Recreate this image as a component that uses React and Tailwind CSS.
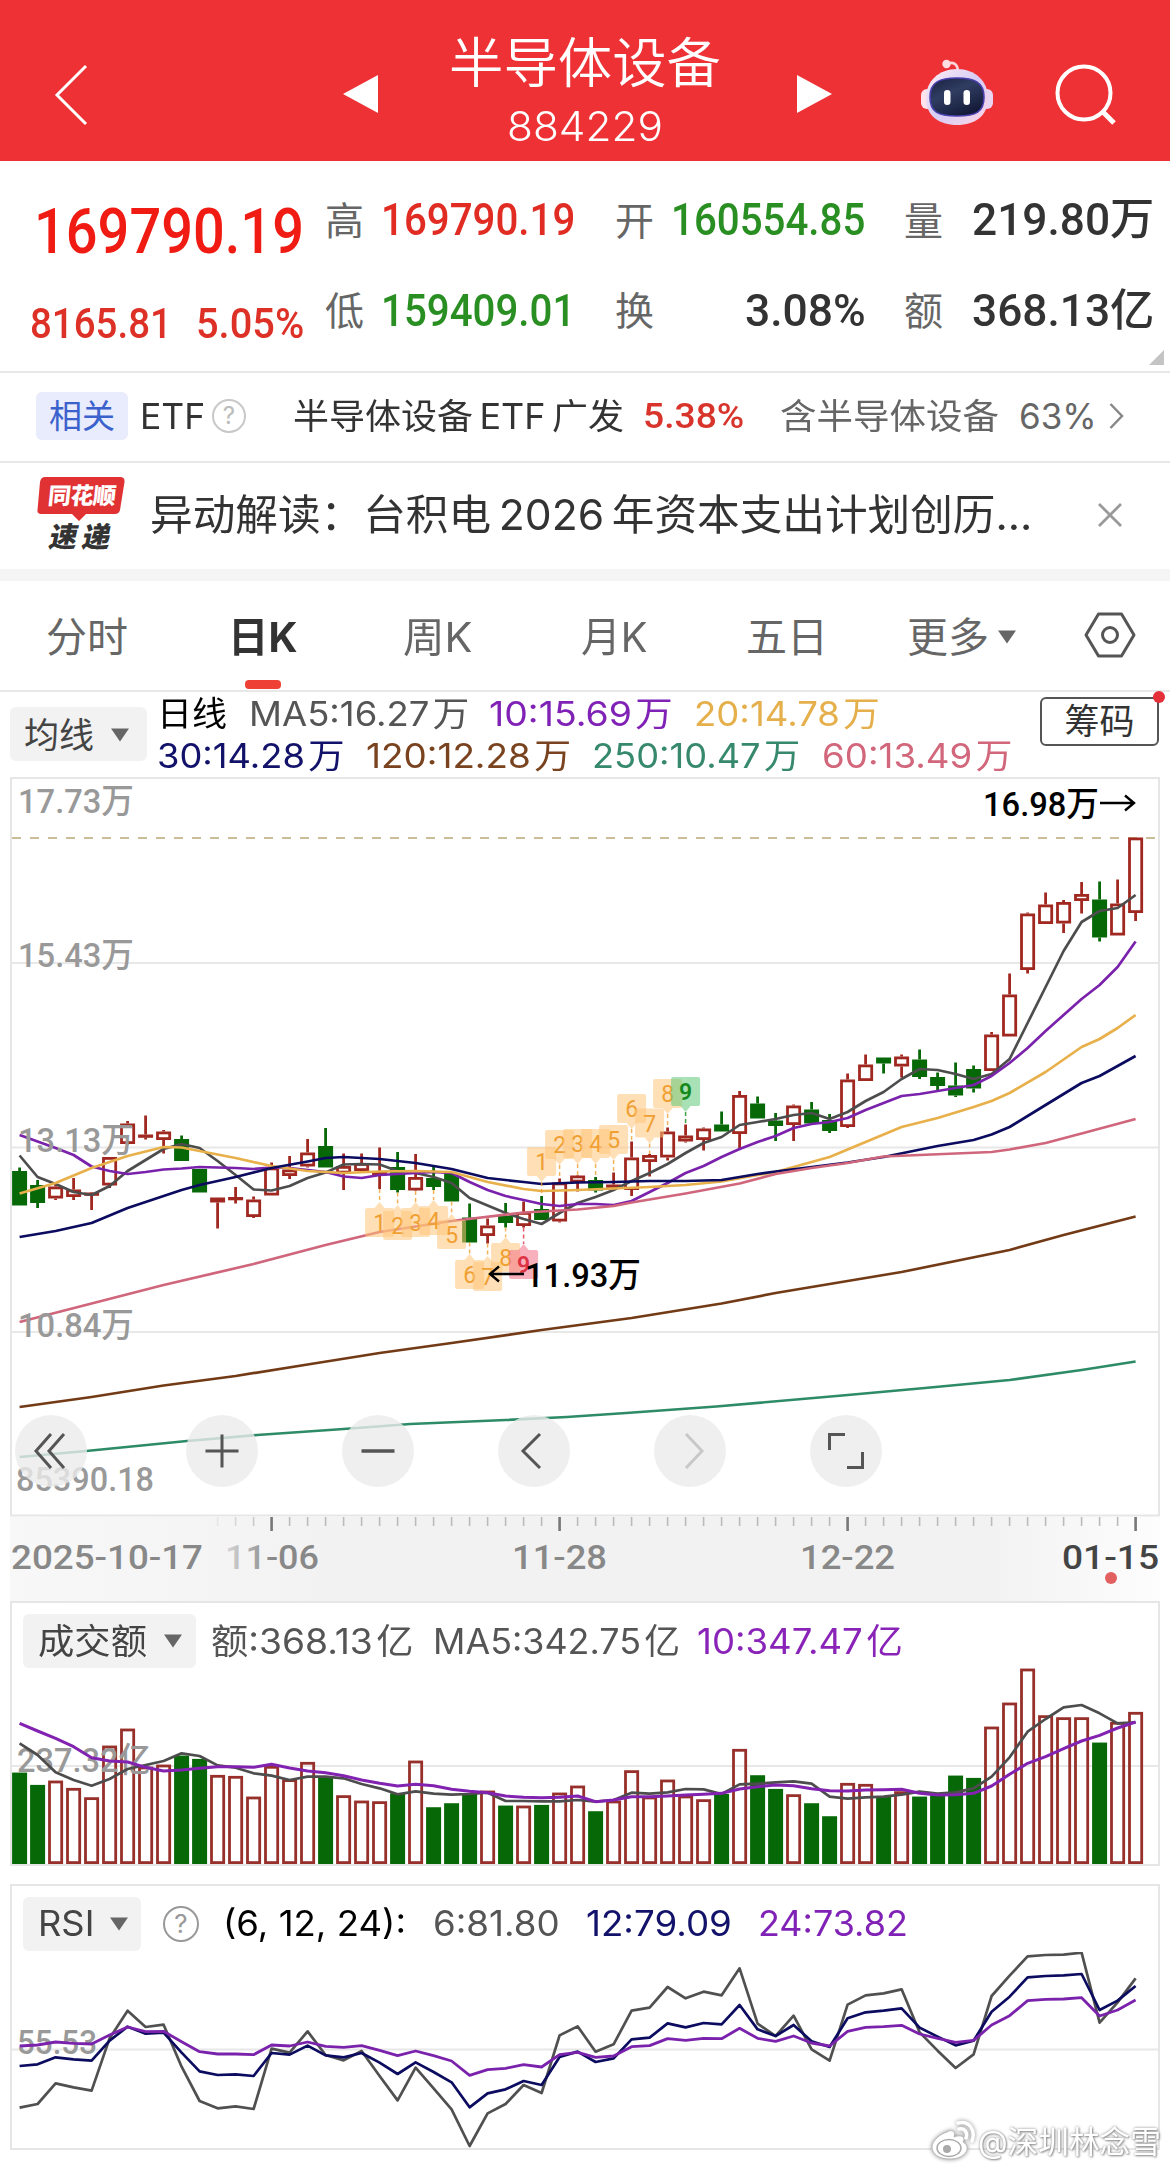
import React, { useLayoutEffect, useRef, useState } from 'react';

// Candle: [type, body top, body bottom, high, low], r = up (hollow), g = down (filled)
const candles = [
  ['g', 1171, 1205.5, 1167.5, 1205.5], ['g', 1185, 1203, 1180, 1208], ['r', 1186.5, 1198.5, 1183, 1200], ['r', 1189.5, 1197, 1178, 1200],
  ['r', 1192.5, 1195.5, 1192, 1210], ['r', 1157, 1185.5, 1157, 1188], ['r', 1123.5, 1144, 1121, 1144.5], ['r', 1134.5, 1137.5, 1115.5, 1139.5],
  ['r', 1131.5, 1140, 1130, 1153.5], ['g', 1139, 1161, 1135.5, 1161], ['g', 1169, 1192.5, 1169, 1192.5], ['r', 1197.5, 1202.5, 1197.5, 1228.5],
  ['r', 1197, 1200, 1187, 1203.5], ['r', 1199.5, 1217, 1196.5, 1218], ['r', 1167.5, 1195.5, 1162.5, 1195.5], ['r', 1169.5, 1176, 1156, 1179],
  ['r', 1152.5, 1166.5, 1139, 1167.5], ['g', 1146, 1167.5, 1128, 1167.5], ['r', 1166, 1173.5, 1153.5, 1190], ['r', 1163, 1171, 1153.5, 1172],
  ['r', 1172, 1175, 1147.5, 1189], ['g', 1167, 1190, 1152, 1192.5], ['r', 1177, 1190.5, 1154, 1191], ['g', 1178, 1187, 1166, 1190],
  ['g', 1173.5, 1201.5, 1172, 1201.5], ['g', 1217.5, 1242.5, 1203.5, 1242.5], ['r', 1225.5, 1236, 1218.5, 1243.5], ['g', 1216, 1223, 1203, 1227.5],
  ['r', 1212, 1226, 1201.5, 1227.5], ['g', 1209, 1220, 1196, 1220], ['r', 1182.5, 1221.5, 1178.5, 1222.5], ['r', 1175.5, 1182.5, 1175, 1191.5],
  ['g', 1180, 1190.5, 1177, 1192.5], ['r', 1184.5, 1187.5, 1172.5, 1189], ['r', 1157.5, 1190, 1141.5, 1196], ['r', 1155, 1162, 1154, 1176.5],
  ['r', 1131.5, 1157.5, 1127.5, 1160.5], ['r', 1135.5, 1141.5, 1124.5, 1142.5], ['r', 1128.5, 1140, 1127.5, 1150.5], ['g', 1124.5, 1131.5, 1111.5, 1131.5],
  ['r', 1095, 1134, 1091, 1148.5], ['g', 1103.5, 1118.5, 1096.5, 1118.5], ['g', 1120.5, 1126, 1113, 1141], ['r', 1105.5, 1125, 1104.5, 1141],
  ['g', 1109.5, 1123.5, 1102, 1123.5], ['g', 1120, 1131, 1114, 1133], ['r', 1079.5, 1127, 1073.5, 1128], ['r', 1064.5, 1081, 1054.5, 1081],
  ['g', 1057.5, 1063.5, 1057.5, 1073.5], ['r', 1056.5, 1066.5, 1054.5, 1077.5], ['g', 1059.5, 1077, 1049.5, 1079], ['g', 1077, 1086, 1072.5, 1090],
  ['g', 1085.5, 1095.5, 1062.5, 1097], ['g', 1069, 1088.5, 1065.5, 1092.5], ['r', 1034.5, 1071, 1032, 1071], ['r', 994.5, 1036.5, 973.5, 1036.5],
  ['r', 913.5, 970, 912.5, 973.5], ['r', 904.5, 924, 892.5, 924], ['r', 902, 923.5, 900, 933], ['r', 894, 901, 882, 913.5],
  ['g', 899.5, 937.5, 881.5, 941.5], ['r', 903.5, 935.5, 879.5, 935.5], ['r', 837.5, 913, 837.5, 921],
];

// Moving averages on the main chart, [bar index, y]
const priceLines = [
  { color: '#2e8b68', pts: [[0, 1457], [3.7, 1451], [9.3, 1441], [13.2, 1435], [18, 1429], [21.7, 1424], [27, 1420], [30.4, 1417], [33.7, 1413], [38.7, 1406.5], [45.7, 1395.5], [50.3, 1388], [55, 1380], [59, 1370], [62, 1361.5]] },
  { color: '#733a16', pts: [[0, 1407], [4, 1397], [8, 1385.5], [12, 1376], [16, 1364.5], [20, 1353], [24, 1343], [29, 1330], [34, 1318], [39, 1303.5], [42, 1293], [49, 1272], [55, 1250], [58, 1235], [62, 1216.5]] },
  { color: '#4d4d4d', pts: [1155.5, 1177, 1184, 1192, 1195, 1186, 1171, 1160, 1149, 1144, 1148, 1161, 1175, 1189.5, 1190.5, 1186, 1178, 1172.5, 1164.5, 1164, 1164.5, 1171, 1173, 1177, 1183, 1198, 1205.5, 1213, 1219, 1224, 1213, 1203, 1197, 1190, 1181, 1173, 1164, 1153, 1143, 1137, 1125, 1122, 1119, 1115, 1113, 1119, 1112, 1101, 1092, 1079, 1069, 1070, 1074, 1079, 1074, 1059, 1023, 987, 951, 922, 911, 908, 895].map((y, i) => [i, y]) },
  { color: '#7a22ac', pts: [1135, 1141.5, 1148, 1155, 1166.5, 1171, 1174, 1172, 1169.5, 1168.5, 1167, 1167.5, 1168, 1169, 1167.5, 1168, 1170, 1172, 1176.5, 1178, 1175, 1174, 1173, 1172, 1173, 1182, 1190, 1196, 1200, 1204, 1206, 1204, 1204, 1205, 1201, 1192, 1183, 1173, 1166, 1157, 1149, 1142, 1136, 1128, 1124, 1122, 1118, 1110, 1103, 1096, 1094, 1091, 1088, 1085, 1076, 1063, 1048, 1031, 1015, 999, 985, 967, 941.5].map((y, i) => [i, y]) },
  { color: '#e8b04a', pts: [[0, 1193.5], [2, 1183], [4, 1168], [6, 1156], [8, 1147], [9, 1147.5], [10, 1151], [12, 1158], [14, 1166], [16, 1171], [18, 1173], [20, 1171.5], [22, 1171], [24, 1172], [26, 1182], [28, 1189], [29, 1191], [31, 1190], [33, 1188.5], [35, 1187], [37, 1185], [39, 1181.5], [41, 1175], [42, 1172], [44, 1162], [45, 1157], [47, 1142], [49, 1127], [51, 1118], [53, 1107], [54, 1101], [55, 1093], [57, 1072], [59, 1047], [60, 1039], [61, 1028], [62, 1015]] },
  { color: '#0b0b60', pts: [[0, 1237], [2, 1231], [4, 1223], [6, 1208], [8, 1196], [9, 1190], [10, 1185], [12, 1177], [14, 1168], [16, 1161.5], [17, 1158], [18, 1157], [20, 1159], [22, 1163], [24, 1169], [26, 1178], [28, 1182], [29, 1184], [31, 1182.5], [33, 1182], [35, 1181], [37, 1181], [39, 1180], [41, 1174], [42, 1171.5], [44, 1167], [46, 1162.5], [48, 1157], [51, 1146], [53, 1140], [54, 1134.5], [55, 1127], [57, 1105], [59, 1083], [60, 1076], [62, 1056]] },
  { color: '#d0667c', pts: [[0, 1322], [4, 1303.5], [8, 1285], [13, 1264], [17, 1245], [20, 1232], [24, 1221], [28, 1212.5], [31, 1209.5], [33, 1206], [34, 1202.5], [37, 1193.5], [40, 1183.5], [42, 1174], [44, 1168], [46, 1163], [48, 1156.5], [50, 1155], [54, 1152], [55, 1149.5], [57, 1143], [59, 1133.5], [62, 1119]] },
];

// Turnover bar tops and averages, thirds of a pixel below y=1650
const volumes = [368, 405, 392, 414, 442, 287, 236, 350, 344, 317, 327, 375, 378, 440, 348, 388, 336, 382, 436, 452, 454, 430, 332, 472, 460, 430, 422, 467, 467, 465, 428, 407, 484, 452, 361, 440, 389, 437, 448, 432, 297, 376, 417, 433, 460, 499, 399, 402, 440, 424, 440, 433, 377, 384, 230, 158, 56, 196, 202, 202, 278, 216, 186];
const volumeDown = [0, 1, 9, 10, 17, 21, 23, 24, 25, 27, 29, 32, 39, 41, 42, 44, 45, 48, 50, 51, 52, 53, 60];
const volumeMa5 = [280, 315, 367, 390, 407, 387, 357, 345, 333, 310, 318, 346, 353, 370, 377, 390, 380, 380, 385, 402, 415, 433, 424, 431, 434, 432, 428, 453, 453, 454, 454, 450, 455, 450, 428, 431, 427, 417, 418, 432, 403, 401, 397, 394, 401, 440, 446, 442, 440, 434, 425, 431, 427, 415, 380, 322, 245, 207, 172, 165, 190, 220, 217];
const volumeMa10 = [220, 243, 265, 290, 323, 333, 336, 352, 363, 360, 355, 350, 350, 352, 343, 354, 363, 368, 377, 390, 400, 408, 403, 407, 418, 424, 428, 438, 442, 443, 442, 438, 455, 450, 440, 440, 438, 435, 433, 430, 417, 410, 405, 407, 416, 422, 423, 420, 419, 418, 430, 435, 434, 430, 408, 373, 340, 320, 296, 273, 256, 234, 216];

// RSI values, thirds of a pixel below y=1870
const rsi6 = [713, 702, 640, 652, 662, 505, 422, 471, 464, 590, 693, 715, 709, 717, 536, 548, 484, 555, 571, 543, 618, 691, 593, 655, 718, 828, 730, 702, 645, 669, 496, 469, 545, 523, 422, 413, 351, 385, 365, 376, 295, 461, 498, 437, 538, 572, 404, 376, 370, 358, 487, 542, 594, 553, 378, 317, 259, 255, 254, 248, 458, 397, 325];
const rsi12 = [588, 583, 562, 568, 572, 512, 470, 491, 488, 548, 604, 615, 613, 618, 549, 554, 527, 556, 562, 549, 578, 612, 577, 606, 637, 712, 670, 658, 633, 645, 561, 545, 576, 565, 508, 503, 460, 472, 459, 463, 405, 478, 498, 465, 514, 531, 445, 427, 422, 415, 473, 500, 526, 512, 425, 380, 322, 318, 316, 312, 420, 392, 348];
const rsi24 = [528, 525, 516, 520, 522, 495, 471, 485, 484, 515, 545, 552, 552, 554, 525, 528, 516, 529, 532, 527, 541, 557, 543, 557, 573, 616, 599, 595, 584, 591, 554, 547, 562, 558, 530, 527, 506, 511, 505, 506, 475, 505, 514, 498, 519, 528, 484, 472, 470, 466, 492, 505, 517, 511, 465, 437, 392, 388, 387, 383, 438, 420, 390];

// Nine-turn markers: [bar index, label, box top, side]
const markers = [
  [20, 1, 1208, 'below'], [21, 2, 1211, 'below'], [22, 3, 1208, 'below'], [23, 4, 1206, 'below'], [24, 5, 1220, 'below'],
  [25, 6, 1260, 'below'], [26, 7, 1262, 'below'], [27, 8, 1243, 'below'], [28, 9, 1250, 'below'],
  [29, 1, 1147, 'above'], [30, 2, 1130, 'above'], [31, 3, 1129, 'above'], [32, 4, 1129, 'above'], [33, 5, 1125, 'above'],
  [34, 6, 1094, 'above'], [35, 7, 1108.5, 'above'], [36, 8, 1079, 'above'], [37, 9, 1077, 'above'],
];

const barX = (i) => 19.6 + i * 18;
const toPoints = (pts) => pts.map(([i, y]) => `${barX(i)},${y}`).join(' ');
const seriesPoints = (values, base) => values.map((v, i) => `${barX(i)},${base + v / 3}`).join(' ');

// Squeezes or stretches one line of text to a fixed width
const Fit = ({ w, className = '', children }) => {
  const ref = useRef(null);
  const [scale, setScale] = useState(1);

  useLayoutEffect(() => {
    setScale(w / ref.current.offsetWidth);
  }, [w]);

  return (
    <span className="block shrink-0 whitespace-nowrap" style={{ width: w }}>
      <span ref={ref} className={`inline-block origin-left ${className}`} style={{ transform: `scaleX(${scale})` }}>
        {children}
      </span>
    </span>
  );
};

const Line = ({ points, color, width = 2.7 }) => (
  <polyline points={points} fill="none" stroke={color} strokeWidth={width} strokeLinejoin="round" />
);

const Down = ({ className = '' }) => (
  <svg className={`shrink-0 ${className}`} viewBox="0 0 18 14">
    <path d="M0 0.5H18L9 13.5Z" fill="#666" />
  </svg>
);

const AxisLabel = ({ x, y, w, children, color = '#999' }) => (
  <text x={x} y={y} textLength={w} lengthAdjust="spacingAndGlyphs" fontSize="34" fontWeight="500" fill={color} className="font-[Roboto,'Noto_Sans_CJK_SC',sans-serif]">
    {children}
  </text>
);

const Header = () => (
  <header className="flex h-[161px] items-center bg-[#ee3135] pl-[53px] text-white">
    <svg className="mt-[28px] h-[62px] w-[36px]" viewBox="0 0 36 62" fill="none" stroke="#fff" strokeWidth="3">
      <path d="M33 2L4 31L33 60" />
    </svg>
    <svg className="mt-[26px] ml-[254px] h-[38px] w-[35px]" viewBox="0 0 35 38">
      <path d="M35 0V38L0 19Z" fill="#fff" />
    </svg>
    <div className="ml-[70px] flex w-[274px] flex-col items-center pt-[20px]">
      <span className="text-[54px] leading-[64px] font-[350]"><Fit w={272}>半导体设备</Fit></span>
      <span className="mt-[7px] text-[41px] leading-[46px] font-[350]">
        <Fit w={156}>884229</Fit>
      </span>
    </div>
    <svg className="mt-[26px] ml-[75px] h-[38px] w-[35px]" viewBox="0 0 35 38">
      <path d="M0 0V38L35 19Z" fill="#fff" />
    </svg>
    <svg className="mt-[23px] ml-[88px] h-[68px] w-[74px]" viewBox="0 0 74 68">
      <defs>
        <linearGradient id="shell" x1="0" y1="0" x2="1" y2="1">
          <stop offset="0" stopColor="#ffeef2" />
          <stop offset="0.5" stopColor="#d6cdf6" />
          <stop offset="1" stopColor="#fdd5e4" />
        </linearGradient>
        <linearGradient id="visor" x1="0" y1="0" x2="0.6" y2="1">
          <stop offset="0" stopColor="#18203f" />
          <stop offset="0.45" stopColor="#303d62" />
          <stop offset="1" stopColor="#141b38" />
        </linearGradient>
      </defs>
      <path d="M27 6C33 3 38 6 38 14" fill="none" stroke="#ffd5da" strokeWidth="2.6" />
      <circle cx="26.5" cy="6" r="4.2" fill="#ffdfe3" />
      <rect x="1" y="31" width="14" height="20" rx="6" fill="#ffe3ec" />
      <rect x="59" y="31" width="14" height="20" rx="6" fill="#e9d4f2" />
      <path d="M37 11C55 11 68 23 68 40C68 58 55 67 37 67C19 67 6 58 6 40C6 23 19 11 37 11Z" fill="url(#shell)" />
      <path d="M37 20C54 20 64 24 64 39C64 54 56 58 37 58C18 58 10 54 10 39C10 24 20 20 37 20Z" fill="url(#visor)" stroke="#4a3fae" strokeWidth="1.6" />
      <rect x="24" y="32" width="6.5" height="15" rx="3.2" fill="#fff" />
      <rect x="43.5" y="32" width="6.5" height="15" rx="3.2" fill="#fff" />
    </svg>
    <svg className="mt-[26px] ml-[61px] h-[62px] w-[62px]" viewBox="0 0 62 62" fill="none" stroke="#fff" strokeWidth="4">
      <circle cx="29" cy="30" r="26.5" />
      <path d="M48 49L59 60" strokeWidth="5" />
    </svg>
  </header>
);

const Quote = () => (
  <section className="relative h-[210px] font-[Roboto,'Noto_Sans_CJK_SC',sans-serif] font-medium">
    <div className="flex h-[118px] items-center pl-[34px] text-[44px] leading-none text-[#333]">
      <span className="pt-[22px] text-[63px] text-[#f01b12]"><Fit w={270}>169790.19</Fit></span>
      <span className="ml-[21px] pt-[4px] text-[39px] font-normal text-[#666]">高</span>
      <span className="ml-[17px] text-[#e02c23]"><Fit w={194}>169790.19</Fit></span>
      <span className="ml-[40px] pt-[4px] text-[39px] font-normal text-[#666]">开</span>
      <span className="ml-[17px] text-[#2a8f22]"><Fit w={194}>160554.85</Fit></span>
      <span className="ml-[39px] pt-[4px] text-[39px] font-normal text-[#666]">量</span>
      <span className="ml-[29px]"><Fit w={182}>219.80万</Fit></span>
    </div>
    <div className="flex h-[64px] items-center pl-[30px] text-[44px] leading-none text-[#333]">
      <span className="pt-[26px] text-[42px] text-[#dd3128]"><Fit w={142}>8165.81</Fit></span>
      <span className="ml-[24px] pt-[26px] text-[42px] text-[#dd3128]"><Fit w={108}>5.05%</Fit></span>
      <span className="ml-[21px] pt-[2px] text-[39px] font-normal text-[#666]">低</span>
      <span className="ml-[17px] text-[#2a8f22]"><Fit w={194}>159409.01</Fit></span>
      <span className="ml-[40px] pt-[2px] text-[39px] font-normal text-[#666]">换</span>
      <span className="ml-[91px]"><Fit w={121}>3.08%</Fit></span>
      <span className="ml-[38px] pt-[2px] text-[39px] font-normal text-[#666]">额</span>
      <span className="ml-[29px]"><Fit w={182}>368.13亿</Fit></span>
    </div>
    <svg className="absolute right-[6px] bottom-[6px] h-[15px] w-[15px]" viewBox="0 0 15 15">
      <path d="M15 0V15H0Z" fill="#c4c4c4" />
    </svg>
  </section>
);

const EtfRow = () => (
  <section className="flex h-[90px] items-center border-t-2 border-[#e8e8e8] pb-[2px] pl-[36px] text-[35px] leading-none text-[#333]">
    <span className="flex h-[48px] w-[92px] items-center justify-center rounded-[6px] bg-[#e8ecfc] text-[33px] text-[#3b61cc]">相关</span>
    <span className="ml-[12px]"><Fit w={65}>ETF</Fit></span>
    <span className="ml-[7px] flex h-[34px] w-[34px] items-center justify-center rounded-full border-2 border-[#c8c8c8] text-[24px] text-[#bbb]">?</span>
    <span className="ml-[47px]"><Fit w={331}>{'半导体设备\u2009ETF\u2009广发'}</Fit></span>
    <span className="ml-[19px] font-[Roboto] font-medium text-[#d8342b]"><Fit w={101}>5.38%</Fit></span>
    <span className="ml-[36px] text-[#666]"><Fit w={219}>含半导体设备</Fit></span>
    <span className="ml-[20px] text-[#666]"><Fit w={78}>63%</Fit></span>
    <svg className="ml-[12px] h-[26px] w-[15px]" viewBox="0 0 15 26" fill="none" stroke="#888" strokeWidth="2.5">
      <path d="M1.5 1L13 13L1.5 25" />
    </svg>
  </section>
);

const NewsRow = () => (
  <section className="flex h-[108px] items-center border-t-2 border-[#e8e8e8] pb-[2px] pl-[36px] text-[#333]">
    <div className="relative flex h-[78px] w-[92px] flex-col items-center pt-[4px] leading-none">
      <svg className="absolute inset-0 h-[78px] w-[92px]" viewBox="0 0 92 78">
        <path d="M9 1H84Q89 1 88.500 6L84 34Q83 38 79 38H50L43 45L36 38H5Q1 38 1.500 34L4 6Q5 1 9 1Z" fill="#e03133" />
      </svg>
      <span className="relative flex h-[33px] -skew-x-6 items-center text-[23px] font-black tracking-[-0.5px] text-white">同花顺</span>
      <span className="relative mt-[9px] flex h-[30px] -skew-x-12 items-center pl-[2px] text-[28px] font-black tracking-[5px]">速递</span>
    </div>
    <span className="ml-[22px] text-[42px] leading-none"><Fit w={882}>{'异动解读：台积电\u20092026\u2009年资本支出计划创历...'}</Fit></span>
    <svg className="ml-[66px] h-[24px] w-[24px]" viewBox="0 0 24 24" stroke="#999" strokeWidth="2.8">
      <path d="M1 1L23 23M23 1L1 23" />
    </svg>
  </section>
);

const Tabs = () => (
  <nav className="flex h-[111px] items-center border-b-2 border-[#e8e8e8] pt-[3px] pl-[46px] text-[41px] leading-none text-[#666]">
    <span className="w-[182px]">分时</span>
    <span className="relative w-[175px] font-bold text-[#333]">
      <Fit w={70}>日K</Fit>
      <span className="absolute top-[63px] left-[17px] h-[9px] w-[36px] rounded-[4px] bg-[#ee4034]" />
    </span>
    <span className="w-[178px]"><Fit w={70}>周K</Fit></span>
    <span className="w-[165px]"><Fit w={67}>月K</Fit></span>
    <span className="w-[161px]">五日</span>
    <span className="w-[82px]">更多</span>
    <Down className="ml-[8px] h-[14px] w-[20px]" />
    <svg className="-mt-[4px] ml-[67px] h-[46px] w-[52px]" viewBox="0 0 52 46" fill="none" stroke="#555" strokeWidth="3">
      <path d="M14.500 2H37.500L50 23L37.500 44H14.500L2 23Z" strokeLinejoin="round" />
      <circle cx="26" cy="23" r="7.500" />
    </svg>
  </nav>
);

const MaLegend = () => (
  <section className="flex h-[85px] pl-[10px] text-[34px] leading-none">
    <div className="mt-[15px] flex h-[54px] w-[137px] items-center rounded-[6px] bg-[#f2f2f2] pt-[2px] pl-[14px] text-[35px] text-[#444]">
      均线
      <Down className="ml-[17px] h-[14px] w-[18px]" />
    </div>
    <div className="ml-[10px] w-[883px]">
      <div className="flex h-[44px] items-center">
        <span className="text-black"><Fit w={70}>日线</Fit></span>
        <span className="ml-[22px] text-[#555]"><Fit w={220}>{'MA5:16.27\u200A万'}</Fit></span>
        <span className="ml-[20px] text-[#7f22b5]"><Fit w={184}>{'10:15.69\u200A万'}</Fit></span>
        <span className="ml-[21px] text-[#e5b04c]"><Fit w={186}>{'20:14.78\u200A万'}</Fit></span>
      </div>
      <div className="flex h-[40px] items-center">
        <span className="text-[#12126a]"><Fit w={188}>{'30:14.28\u200A万'}</Fit></span>
        <span className="ml-[21px] text-[#7a431f]"><Fit w={205}>{'120:12.28\u200A万'}</Fit></span>
        <span className="ml-[21px] text-[#36896c]"><Fit w={208}>{'250:10.47\u200A万'}</Fit></span>
        <span className="ml-[22px] text-[#d2677c]"><Fit w={190}>{'60:13.49\u200A万'}</Fit></span>
      </div>
    </div>
    <div className="relative mt-[5px] flex h-[49px] w-[119px] items-center justify-center rounded-[6px] border-2 border-[#555] text-[35px] text-[#333]">
      筹码
      <span className="absolute -top-[8px] -right-[8px] h-[12px] w-[12px] rounded-full bg-[#e5303a]" />
    </div>
  </section>
);

const Candle = ({ i, data: [type, top, bottom, high, low] }) => {
  const x = barX(i);
  const color = type === 'r' ? '#a02820' : '#066806';
  return (
    <g stroke={color} fill={type === 'r' ? 'none' : color} strokeWidth="2.800">
      {high < top && <path d={`M${x} ${high}V${top}`} />}
      {low > bottom && <path d={`M${x} ${bottom}V${low}`} />}
      <rect x={x - 6.1} y={top + 1.4} width="12.200" height={Math.max(bottom - top - 2.8, 0.5)} />
    </g>
  );
};

const Marker = ({ data: [i, label, top, side] }) => {
  const x = barX(i);
  const below = side === 'below';
  const nine = label === 9;
  const fill = nine ? (below ? '#f26f86' : '#5fc878') : '#ffc47a';
  const ink = nine ? (below ? '#dd3344' : '#148a1c') : '#f0a033';
  const tip = below ? top - 6 : top + 35;
  const candle = candles[i];
  return (
    <g>
      <path d={below ? `M${x} ${candle[4]}V${tip}` : `M${x} ${tip}V${candle[3]}`} stroke={ink} strokeWidth="1.500" strokeDasharray="4 3" opacity="0.800" />
      <rect x={x - 14.5} y={top} width="29" height="29" rx="2" fill={fill} opacity="0.550" />
      <path d={below ? `M${x - 5} ${top}L${x} ${tip}L${x + 5} ${top}Z` : `M${x - 5} ${top + 29}L${x} ${tip}L${x + 5} ${top + 29}Z`} fill={fill} opacity="0.550" />
      <text x={x} y={top + 23} textAnchor="middle" fontSize="23" fill={ink} fontWeight={nine ? 600 : 400} className="font-[Roboto]">{label}</text>
    </g>
  );
};

const ZoomButton = ({ children, dim }) => (
  <button className="flex h-[72px] w-[72px] items-center justify-center rounded-full bg-[#ebebeb]/80">
    <svg className="h-[40px] w-[40px]" viewBox="0 0 40 40" fill="none" stroke={dim ? '#c8c8c8' : '#555'} strokeWidth="3">
      {children}
    </svg>
  </button>
);

const PriceChart = () => (
  <section className="relative h-[740px]">
    <svg className="block h-[740px] w-[1170px]" viewBox="0 777 1170 740">
      <rect x="11" y="778" width="1148" height="737.500" fill="none" stroke="#e6e6e6" strokeWidth="2" />
      <path d="M12 963H1158M12 1147.500H1158M12 1332H1158" stroke="#e8e8e8" strokeWidth="1.800" />
      <path d="M12 838H1156" stroke="#b9a877" strokeWidth="1.500" strokeDasharray="9 9" />
      {candles.map((c, i) => <Candle key={i} i={i} data={c} />)}
      {priceLines.map((l, i) => <Line key={i} points={toPoints(l.pts)} color={l.color} />)}
      {markers.map((m, i) => <Marker key={i} data={m} />)}
      <AxisLabel x={18} y={813} w={116}>17.73万</AxisLabel>
      <AxisLabel x={18} y={967} w={116}>15.43万</AxisLabel>
      <AxisLabel x={18} y={1152} w={116}>13.13万</AxisLabel>
      <AxisLabel x={18} y={1337} w={116}>10.84万</AxisLabel>
      <AxisLabel x={16} y={1491} w={138}>85390.18</AxisLabel>
      <AxisLabel x={983} y={816} w={116} color="#000">16.98万</AxisLabel>
      <AxisLabel x={525} y={1286.5} w={116} color="#000">11.93万</AxisLabel>
      <path d="M1100 803H1134M1125 795.500L1134 803L1125 810.500M524 1274H490M499 1266.500L490 1274L499 1281.500" fill="none" stroke="#000" strokeWidth="2.400" />
    </svg>
    <div className="absolute top-[638px] left-[15px] flex gap-[84px]">
      <div className="mr-[14.500px]">
        <ZoomButton><path d="M20 3L5 20L20 37M33 3L18 20L33 37" /></ZoomButton>
      </div>
      <ZoomButton><path d="M20 3.500V36.500M3.500 20H36.500" /></ZoomButton>
      <ZoomButton><path d="M3.500 20H36.500" strokeWidth="3.600" /></ZoomButton>
      <ZoomButton><path d="M26 3L9 20L26 37" /></ZoomButton>
      <ZoomButton dim><path d="M16 3L32 20L16 37" /></ZoomButton>
      <ZoomButton><path d="M3.500 19V3.500H19M36.500 21V36.500H21" /></ZoomButton>
    </div>
  </section>
);

const DateAxis = () => (
  <svg className="block h-[84px] w-[1170px]" viewBox="0 1517 1170 84">
    <defs>
      <linearGradient id="axisX" x1="0" x2="1" y1="0" y2="0">
        <stop offset="0" stopColor="#f8f8f8" />
        <stop offset="0.300" stopColor="#f2f2f2" />
        <stop offset="0.850" stopColor="#f2f2f2" />
        <stop offset="1" stopColor="#fdfdfd" />
      </linearGradient>
      <linearGradient id="fade" x1="0" x2="1" y1="0" y2="0">
        <stop offset="0" stopColor="#d8d8d8" />
        <stop offset="0.500" stopColor="#888" />
      </linearGradient>
    </defs>
    <rect x="10" y="1517" width="1150" height="84" fill="url(#axisX)" />
    {candles.map((_, i) => {
      if (i < 11) return null;
      const major = i % 16 === 14;
      return <path key={i} d={`M${barX(i)} 1517V${major ? 1531 : 1526}`} stroke={major ? '#777' : '#bbb'} strokeWidth={major ? 2.6 : 1.6} opacity={i < 14 ? (i - 10) * 0.25 : 1} />;
    })}
    <AxisLabel x={11} y={1569} w={192} color="#888">2025-10-17</AxisLabel>
    <AxisLabel x={225} y={1569} w={94} color="url(#fade)">11-06</AxisLabel>
    <AxisLabel x={512} y={1569} w={95} color="#888">11-28</AxisLabel>
    <AxisLabel x={800} y={1569} w={95} color="#888">12-22</AxisLabel>
    <AxisLabel x={1062} y={1569} w={97} color="#444">01-15</AxisLabel>
    <circle cx="1111" cy="1578" r="6" fill="#e2605f" />
  </svg>
);

const VolumePanel = () => (
  <section className="h-[283px]">
    <div className="mx-[10px] h-[265px] border-2 border-[#e6e6e6] leading-none">
      <div className="flex h-[64px] items-center pt-[12px] pl-[11px] text-[35px]">
        <div className="flex h-[54px] w-[173px] items-center rounded-[6px] bg-[#f2f2f2] pl-[15px] text-[#444]">
          <Fit w={109}>成交额</Fit>
          <Down className="ml-[17px] h-[14px] w-[18px]" />
        </div>
        <span className="ml-[15px] text-[#555]"><Fit w={202}>{'额:368.13\u200A亿'}</Fit></span>
        <span className="ml-[20px] text-[#555]"><Fit w={247}>{'MA5:342.75\u200A亿'}</Fit></span>
        <span className="ml-[17px] text-[#8a24b8]"><Fit w={206}>{'10:347.47\u200A亿'}</Fit></span>
      </div>
      <svg className="block h-[197px] w-[1146px]" viewBox="12 1667 1146 197">
        <path d="M12 1766H1158" stroke="#e8e8e8" strokeWidth="1.800" />
        {volumes.map((v, i) => {
          const top = 1650 + v / 3;
          const down = volumeDown.includes(i);
          const color = down ? '#066806' : '#97302a';
          return <rect key={i} x={barX(i) - 6.1} y={top + 1.3} width="12.200" height={1862.6 - top - 1.3} fill={down ? color : 'none'} stroke={color} strokeWidth="2.800" />;
        })}
        <AxisLabel x={17} y={1771.5} w={134}>237.32亿</AxisLabel>
        <Line points={seriesPoints(volumeMa5, 1650)} color="#4d4d4d" />
        <Line points={seriesPoints(volumeMa10, 1650)} color="#8222b0" width={3} />
      </svg>
    </div>
  </section>
);

const RsiPanel = () => (
  <section className="mx-[10px] h-[266px] border-2 border-[#e6e6e6] leading-none">
    <div className="flex h-[66px] items-center pt-[9px] pl-[11px] text-[35px]">
      <div className="flex h-[54px] w-[118px] items-center rounded-[6px] bg-[#f2f2f2] pl-[15px] text-[#444]">
        <Fit w={56}>RSI</Fit>
        <Down className="ml-[16px] h-[14px] w-[18px]" />
      </div>
      <span className="ml-[22px] flex h-[36px] w-[36px] items-center justify-center rounded-full border-2 border-[#999] text-[26px] text-[#999]">?</span>
      <span className="ml-[24px] text-black"><Fit w={183}>(6, 12, 24):</Fit></span>
      <span className="ml-[27px] text-[#555]"><Fit w={127}>6:81.80</Fit></span>
      <span className="ml-[26px] text-[#12126a]"><Fit w={146}>12:79.09</Fit></span>
      <span className="ml-[26px] text-[#7f22b5]"><Fit w={150}>24:73.82</Fit></span>
    </div>
    <svg className="block h-[196px] w-[1146px]" viewBox="12 1952 1146 196">
      <path d="M12 2049.500H1158" stroke="#e8e8e8" strokeWidth="1.800" />
      <AxisLabel x={17} y={2053.5} w={80}>55.53</AxisLabel>
      <Line points={seriesPoints(rsi6, 1870)} color="#505050" />
      <Line points={seriesPoints(rsi12, 1870)} color="#0b0b60" />
      <Line points={seriesPoints(rsi24, 1870)} color="#7a22ac" width={2.8} />
    </svg>
  </section>
);

const Watermark = () => (
  <div className="absolute right-[9px] bottom-[9px] flex items-center text-[31px] leading-none text-white [text-shadow:0_0_3px_#888,1px_1px_2px_#999]">
    <svg className="mr-[3px] h-[42px] w-[44px] drop-shadow-[0_0_2px_#888]" viewBox="0 0 44 42">
      <path d="M16 12C21 9 25 11 23 17C30 14 35 17 32 22C41 27 35 39 19 39C8 39 1 34 1 27C1 21 9 14 16 12Z" fill="#fff" stroke="#bbb" strokeWidth="1" />
      <ellipse cx="18" cy="28" rx="12" ry="8.500" fill="none" stroke="#aaa" strokeWidth="1.500" />
      <circle cx="16" cy="29" r="4" fill="#aaa" />
      <path d="M28 9C34 8 37 13 35 18M27 3C38 0 45 10 41 21" fill="none" stroke="#fff" strokeWidth="3.500" strokeLinecap="round" />
    </svg>
    <Fit w={183}>@深圳林念雪</Fit>
  </div>
);

const App = () => (
  <div className="relative h-[2171px] w-[1170px] overflow-hidden bg-white font-[Inter,'Noto_Sans_CJK_SC',sans-serif]">
    <Header />
    <Quote />
    <EtfRow />
    <NewsRow />
    <div className="h-[12px] bg-[#f5f5f5]" />
    <Tabs />
    <MaLegend />
    <PriceChart />
    <DateAxis />
    <VolumePanel />
    <RsiPanel />
    <Watermark />
  </div>
);

export default App;
